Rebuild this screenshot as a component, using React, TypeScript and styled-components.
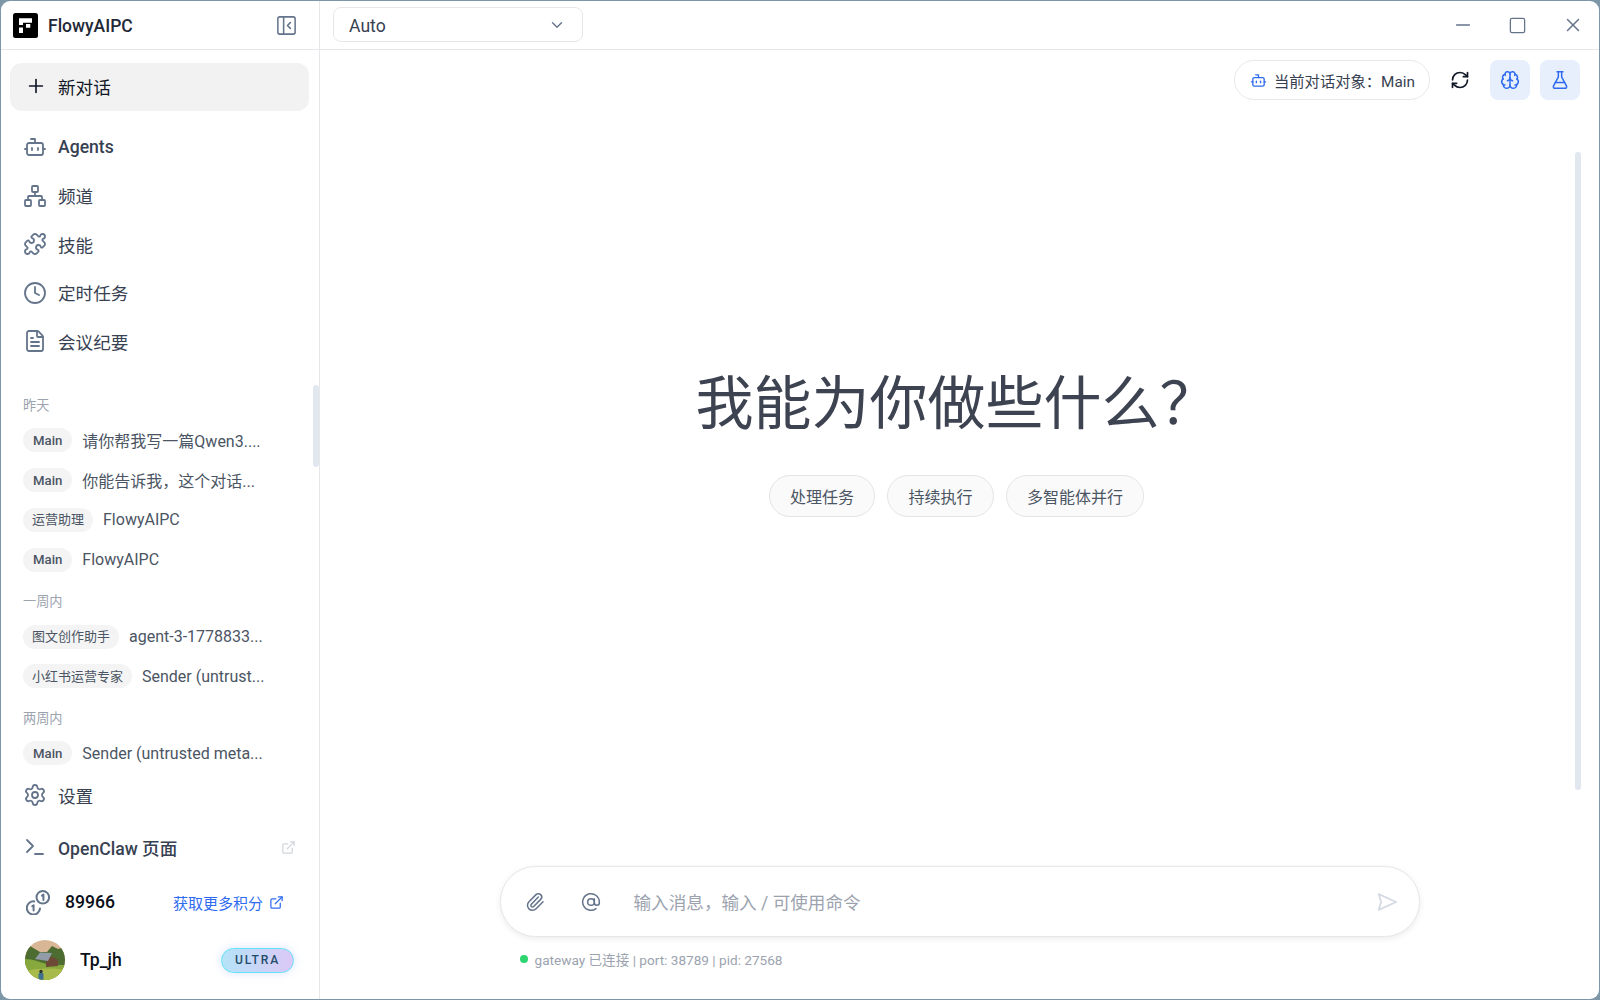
import React from 'react';
import styled, { createGlobalStyle } from 'styled-components';
import { Bot, Network, Puzzle, Clock, FileText, Settings, Terminal, ExternalLink, Paperclip, AtSign, RefreshCw, Brain, FlaskConical, Plus, ChevronDown, PanelLeftClose, Minus, Square, X } from 'lucide-react';

const SANS = `Roboto, "Noto Sans CJK SC", sans-serif`;

const Global = createGlobalStyle`
  html, body { margin: 0; padding: 0; height: 100%; }
  body { background: #7d97a9; font-family: ${SANS}; overflow: hidden; }
  #root { height: 100%; }
  * { box-sizing: border-box; }
`;

const Desktop = styled.div`
  height: 1000px;
  width: 1600px;
  padding: 1px;
  background: #7d97a9;
`;
const Win = styled.div`
  height: 100%;
  display: flex;
  background: #fff;
  border-radius: 9px;
  overflow: hidden;
`;
const Sidebar = styled.aside`
  position: relative;
  width: 319px;
  flex: none;
  display: flex;
  flex-direction: column;
  border-right: 1px solid #e5e7eb;
`;
const Brand = styled.header`
  height: 49px;
  flex: none;
  display: flex;
  align-items: center;
  padding: 0 21px 0 12px;
  border-bottom: 1px solid #e5e7eb;
`;
const Logo = styled.svg`
  width: 25px;
  height: 25px;
  flex: none;
`;
const BrandName = styled.span`
  margin-left: 10px;
  padding-top: 1px;
  flex: 1;
  font-size: 17.5px;
  font-weight: 500;
  color: #1f2937;
`;
const CollapseBtn = styled.span`
  display: flex;
  color: #64748b;
`;
const NewChat = styled.button`
  margin: 13px 10px 12px 9px;
  height: 48px;
  flex: none;
  border: 0;
  border-radius: 12px;
  background: #f2f2f2;
  display: flex;
  align-items: center;
  padding: 0 0 2px 15px;
  gap: 11px;
  font-family: ${SANS};
  font-size: 17.6px;
  color: #111827;
`;
const NavRow = styled.div<{ $h?: number }>`
  height: ${p => p.$h ?? 48.5}px;
  flex: none;
  display: flex;
  align-items: center;
  padding: 0 23px 0 22px;
  gap: 11px;
  font-size: 17.6px;
  color: #374151;
  svg { color: #64748b; flex: none; }
`;
const NavLabel = styled.span<{ $strong?: boolean }>`
  flex: 1;
  font-weight: ${p => (p.$strong ? 500 : 400)};
`;
const History = styled.div`
  flex: 1;
  min-height: 0;
  padding-top: 30.5px;
  overflow: hidden;
`;
const GroupLabel = styled.div`
  height: 20px;
  line-height: 20px;
  margin: 12.5px 0 4.5px 22px;
  font-size: 13.2px;
  color: #9ca3af;
  &:first-child { margin-top: 0; }
`;
const HistoryRow = styled.div`
  height: 39.8px;
  display: flex;
  align-items: center;
  padding-left: 22px;
  gap: 10px;
`;
const AgentChip = styled.span`
  height: 24px;
  flex: none;
  display: inline-flex;
  align-items: center;
  padding: 0 10px;
  border-radius: 12px;
  background: #f4f4f5;
  font-size: 13.2px;
  font-weight: 500;
  color: #4b5563;
`;
const CnChip = styled(AgentChip)`
  padding: 0 9px 2px;
  font-size: 13px;
  font-weight: 400;
`;
const HistoryTitle = styled.span`
  font-size: 16px;
  color: #4b5563;
  white-space: nowrap;
`;
const SideThumb = styled.div`
  position: absolute;
  right: 0;
  top: 384px;
  width: 6px;
  height: 82px;
  border-radius: 3px;
  background: #e2e8f0;
`;
const Credits = styled.div`
  height: 48px;
  margin-top: 3.5px;
  flex: none;
  display: flex;
  align-items: center;
  padding: 0 35px 0 25px;
  svg { flex: none; }
`;
const CreditValue = styled.span`
  margin-left: 15px;
  flex: 1;
  font-size: 17.6px;
  font-weight: 500;
  color: #0b0f19;
`;
const CreditLink = styled.a`
  display: flex;
  align-items: center;
  gap: 6px;
  font-size: 15px;
  color: #2f6bf0;
`;
const UserRow = styled.div`
  height: 62px;
  margin: 3px 0 8px;
  flex: none;
  display: flex;
  align-items: center;
  padding: 0 25px 0 24px;
`;
const Avatar = styled.svg`
  width: 40px;
  height: 40px;
  border-radius: 50%;
  flex: none;
`;
const UserName = styled.span`
  margin-left: 15px;
  flex: 1;
  font-size: 17.6px;
  font-weight: 500;
  color: #0b0f19;
`;
const Ultra = styled.span`
  width: 73px;
  height: 25px;
  display: flex;
  align-items: center;
  justify-content: center;
  border-radius: 13px;
  border: 1px solid #62e2f8;
  background: linear-gradient(90deg, #b5e3f8, #dcc8f6);
  box-shadow: 0 0 9px rgba(150, 170, 250, 0.35);
  font-size: 12.1px;
  font-weight: 500;
  letter-spacing: 1.8px;
  color: #1f4d6b;
`;
const Main = styled.main`
  position: relative;
  flex: 1;
  min-width: 0;
  display: flex;
  flex-direction: column;
`;
const TopBar = styled.div`
  height: 49px;
  flex: none;
  display: flex;
  align-items: center;
  padding: 0 0 0 13px;
  border-bottom: 1px solid #e5e7eb;
`;
const ModelSelect = styled.div`
  width: 250px;
  height: 35px;
  margin-top: -1px;
  display: flex;
  align-items: center;
  justify-content: space-between;
  padding: 0 16px 0 15px;
  border: 1px solid #e5e7eb;
  border-radius: 8px;
  font-size: 17.6px;
  color: #374151;
  svg { color: #64748b; }
`;
const ModelValue = styled.span`
  padding-top: 2px;
`;
const WinControls = styled.div`
  margin-left: auto;
  margin-right: -1px;
  display: flex;
  align-items: center;
  color: #64748b;
`;
const WinBtn = styled.span`
  width: 55px;
  display: flex;
  justify-content: center;
`;
const Toolbar = styled.div`
  flex: none;
  height: 60px;
  display: flex;
  align-items: center;
  justify-content: flex-end;
  padding: 0 19px 0 0;
`;
const TargetChip = styled.div`
  width: 196px;
  height: 40px;
  display: flex;
  align-items: center;
  padding-left: 15px;
  gap: 7px;
  border: 1px solid #e5e7eb;
  border-radius: 20px;
  font-size: 15.3px;
  white-space: nowrap;
  color: #374151;
  svg { color: #2f6bf0; flex: none; }
`;
const IconPlain = styled.span`
  width: 60px;
  display: flex;
  justify-content: center;
  color: #111827;
`;
const IconBlue = styled.span`
  width: 40px;
  height: 40px;
  display: flex;
  align-items: center;
  justify-content: center;
  border-radius: 8px;
  background: #e8effc;
  color: #2f6bf0;
  & + & { margin-left: 10px; }
`;
const Hero = styled.div`
  flex: 1;
  display: flex;
  flex-direction: column;
  align-items: center;
  padding: 255px 6px 0 0;
`;
const Heading = styled.h1`
  margin: 0;
  height: 80px;
  line-height: 80px;
  font-family: "Liberation Serif", "Noto Sans CJK SC", serif;
  font-weight: 400;
  font-size: 58px;
  color: #3d4350;
  white-space: nowrap;
`;
const Suggestions = styled.div`
  margin-top: 30px;
  display: flex;
  gap: 12.5px;
`;
const Suggestion = styled.button`
  height: 42px;
  padding: 0 20px;
  border-radius: 21px;
  border: 1px solid #e5e5e5;
  background: #fafafa;
  font-family: ${SANS};
  font-size: 16px;
  color: #4b5563;
`;
const Composer = styled.div`
  width: 920px;
  height: 71px;
  flex: none;
  margin: 0 auto;
  display: flex;
  align-items: center;
  padding: 0 21px 0 24px;
  border: 1px solid #e5e7eb;
  border-radius: 36px;
  background: #fff;
  box-shadow: 0 2px 6px rgba(0, 0, 0, 0.08);
  color: #64748b;
`;
const ComposerIcon = styled.span`
  width: 21px;
  margin-right: 35px;
  display: flex;
  justify-content: center;
  &:nth-child(2) { margin-right: 32px; }
`;
const Placeholder = styled.span`
  flex: 1;
  font-size: 17.6px;
  color: #9ca3af;
`;
const Status = styled.div`
  height: 44px;
  width: 920px;
  flex: none;
  margin: 0 auto 18px;
  display: flex;
  align-items: center;
  padding: 0 0 0 20px;
  font-size: 13.6px;
  color: #9ca3af;
  gap: 7px;
`;
const Dot = styled.span`
  width: 8px;
  height: 8px;
  border-radius: 50%;
  background: #2dd46f;
`;
const MainThumb = styled.div`
  position: absolute;
  right: 18px;
  top: 151px;
  width: 6px;
  height: 638px;
  border-radius: 3px;
  background: #e2e8f0;
`;

const CoinsIcon = () => (
  <svg width="24" height="25" viewBox="0 0 24 25" fill="none" stroke="#64748b" strokeWidth="2" strokeLinecap="round" strokeLinejoin="round">
    <circle cx="16.8" cy="7.3" r="6.3" />
    <path d="M16 5.6 17.4 4.6V10" />
    <path d="M8.3 11.4a6.6 6.6 0 1 0 5.7 7" />
    <path d="M6.2 16.2 7.6 15.2V20.4" />
  </svg>
);

const SendIcon = () => (
  <svg width="22" height="22" viewBox="0 0 24 24" fill="none" stroke="#d5dae3" strokeWidth="2" strokeLinejoin="round">
    <path d="M3 3.5 22 12 3 20.5 5.6 12Z" />
  </svg>
);

const history = [
  { label: '昨天', rows: [
    ['Main', '请你帮我写一篇Qwen3....'],
    ['Main', '你能告诉我\uFF0C这个对话...'],
    ['运营助理', 'FlowyAIPC'],
    ['Main', 'FlowyAIPC'],
  ]},
  { label: '一周内', rows: [
    ['图文创作助手', 'agent-3-1778833...'],
    ['小红书运营专家', 'Sender (untrust...'],
  ]},
  { label: '两周内', rows: [
    ['Main', 'Sender (untrusted meta...'],
  ]},
];

const nav = [
  { Icon: Bot, label: 'Agents', strong: true },
  { Icon: Network, label: '频道' },
  { Icon: Puzzle, label: '技能' },
  { Icon: Clock, label: '定时任务' },
  { Icon: FileText, label: '会议纪要' },
];

export default function App() {
  return (
    <Desktop>
      <Global />
      <Win>
        <Sidebar>
          <Brand>
            <Logo viewBox="0 0 25 25">
              <rect width="25" height="25" rx="2.5" fill="#000" />
              <path d="M6 5.3h13v4.4H10V12H6ZM6 14.5h4V20H6ZM13 11h4.3v3.7H13Z" fill="#fff" />
            </Logo>
            <BrandName>FlowyAIPC</BrandName>
            <CollapseBtn><PanelLeftClose size={23} strokeWidth={1.6} /></CollapseBtn>
          </Brand>
          <NewChat><Plus size={22} strokeWidth={1.8} />新对话</NewChat>
          {nav.map(({ Icon, label, strong }) => (
            <NavRow key={label}>
              <Icon size={24} strokeWidth={1.8} />
              <NavLabel $strong={strong}>{label}</NavLabel>
            </NavRow>
          ))}
          <History>
            {history.map(g => (
              <React.Fragment key={g.label}>
                <GroupLabel>{g.label}</GroupLabel>
                {g.rows.map(([agent, title], i) => (
                  <HistoryRow key={i}>
                    {agent === 'Main' ? <AgentChip>{agent}</AgentChip> : <CnChip>{agent}</CnChip>}
                    <HistoryTitle>{title}</HistoryTitle>
                  </HistoryRow>
                ))}
              </React.Fragment>
            ))}
          </History>
          <SideThumb />
          <NavRow><Settings size={24} strokeWidth={1.8} /><NavLabel>设置</NavLabel></NavRow>
          <NavRow $h={55}>
            <Terminal size={24} strokeWidth={1.8} />
            <NavLabel $strong>OpenClaw 页面</NavLabel>
            <ExternalLink size={15} style={{ color: '#d1d5db' }} />
          </NavRow>
          <Credits>
            <CoinsIcon />
            <CreditValue>89966</CreditValue>
            <CreditLink>获取更多积分<ExternalLink size={15} /></CreditLink>
          </Credits>
          <UserRow>
            <Avatar viewBox="0 0 40 40">
              <rect width="40" height="40" fill="#d9b796" />
              <path d="M0 10 5 6l5 3 5 3 7 0 5-6 6 3 7-2v20H0Z" fill="#4c6c31" />
              <path d="M0 19c8 0 14 3 22 5 6 1 12 1 18 1v15H0Z" fill="#86a83c" />
              <path d="M2 31c10-3 26-3 38-1v10H2Z" fill="#a8bb4a" />
              <path d="M21 17h7l5 3v6l-12 1Z" fill="#6e4a36" />
              <path d="M10 19 15 12.5 27 13 23 21Z" fill="#929ca8" />
              <rect x="13.5" y="33" width="5" height="7" rx="1" fill="#3f6f8f" />
              <circle cx="16" cy="31.5" r="1.7" fill="#2f3330" />
            </Avatar>
            <UserName>Tp_jh</UserName>
            <Ultra>ULTRA</Ultra>
          </UserRow>
        </Sidebar>
        <Main>
          <TopBar>
            <ModelSelect><ModelValue>Auto</ModelValue><ChevronDown size={18} strokeWidth={1.8} /></ModelSelect>
            <WinControls>
              <WinBtn><Minus size={22} strokeWidth={1.6} /></WinBtn>
              <WinBtn><Square size={19} strokeWidth={1.6} /></WinBtn>
              <WinBtn><X size={22} strokeWidth={1.6} /></WinBtn>
            </WinControls>
          </TopBar>
          <Toolbar>
            <TargetChip><Bot size={17} strokeWidth={1.9} />{'当前对话对象\uFF1AMain'}</TargetChip>
            <IconPlain><RefreshCw size={20} strokeWidth={2} /></IconPlain>
            <IconBlue><Brain size={20} strokeWidth={1.8} /></IconBlue>
            <IconBlue><FlaskConical size={20} strokeWidth={1.8} /></IconBlue>
          </Toolbar>
          <Hero>
            <Heading>{'我能为你做些什么\uFF1F'}</Heading>
            <Suggestions>
              <Suggestion>处理任务</Suggestion>
              <Suggestion>持续执行</Suggestion>
              <Suggestion>多智能体并行</Suggestion>
            </Suggestions>
          </Hero>
          <Composer>
            <ComposerIcon><Paperclip size={20} strokeWidth={1.8} /></ComposerIcon>
            <ComposerIcon><AtSign size={20} strokeWidth={1.8} /></ComposerIcon>
            <Placeholder>{'输入消息\uFF0C输入 / 可使用命令'}</Placeholder>
            <SendIcon />
          </Composer>
          <Status><Dot />gateway 已连接 | port: 38789 | pid: 27568</Status>
          <MainThumb />
        </Main>
      </Win>
    </Desktop>
  );
}
